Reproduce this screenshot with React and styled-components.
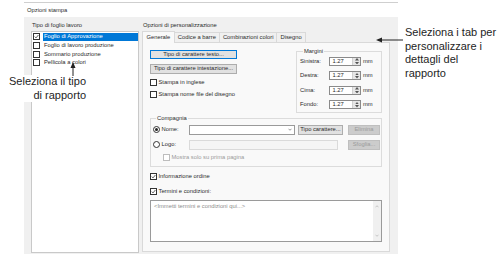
import React from 'react';
import styled, { createGlobalStyle } from 'styled-components';

const GlobalStyle = createGlobalStyle`
  html, body {
    margin: 0;
    padding: 0;
    background: #fff;
  }
  body {
    font-family: "Liberation Sans", Arial, sans-serif;
  }
`;

const Page = styled.div`
  position: relative;
  width: 500px;
  height: 270px;
  overflow: hidden;
  background: #fff;
`;

const Shot = styled.div`
  margin: 2px 0 0 24px;
  width: 374px;
  border-top: 1px solid #cfcfcf;
  font-size: 5.8px;
  line-height: 7px;
  color: #2a2a2a;
`;

const Title = styled.div`
  height: 14px;
  padding-left: 3px;
  display: flex;
  align-items: center;
`;

const Body = styled.div`
  height: 237px;
  display: flex;
  gap: 3px;
  padding: 0 8px 0 7px;
  background: #f0f0f0;
`;

const Column = styled.div`
  width: ${(p) => p.$w}px;
  display: flex;
  flex-direction: column;
`;

const GroupLabel = styled.div`
  height: 14px;
  padding: 4.5px 0 0 1px;
  box-sizing: border-box;
  white-space: nowrap;
`;

const ListBox = styled.div`
  height: 222px;
  background: #fff;
  border: 1px solid #c9c9c9;
  box-sizing: border-box;
  padding-top: 0.5px;
`;

const ListItem = styled.div`
  height: 8.7px;
  display: flex;
  align-items: center;
  padding-left: 1px;
`;

const ItemText = styled.span`
  flex: 1;
  height: 8px;
  margin-left: 3px;
  padding-left: 1px;
  display: flex;
  align-items: center;
  white-space: nowrap;
  background: ${(p) => (p.$selected ? '#0078d7' : 'transparent')};
  color: ${(p) => (p.$selected ? '#fff' : '#2a2a2a')};
`;

const Box = styled.span`
  flex: none;
  width: 7px;
  height: 7px;
  box-sizing: border-box;
  border: 1px solid ${(p) => (p.$disabled ? '#bdbdbd' : '#333')};
  background: #fff;
  display: inline-flex;
  align-items: center;
  justify-content: center;
`;

const Radio = styled(Box)`
  border-radius: 50%;
  &::after {
    content: '';
    width: 3px;
    height: 3px;
    border-radius: 50%;
    background: ${(p) => (p.$on ? '#222' : 'transparent')};
  }
`;

const Check = ({ on, disabled }) => (
  <Box $disabled={disabled}>
    {on && (
      <svg width="5" height="5" viewBox="0 0 10 10">
        <path d="M1.5 5.2 L4 7.8 L8.8 2" fill="none" stroke="#222" strokeWidth="1.4" />
      </svg>
    )}
  </Box>
);

const TabRow = styled.div`
  height: 11px;
  display: flex;
  align-items: flex-end;
  padding-left: 1px;
`;

const Tab = styled.div`
  height: ${(p) => (p.$active ? '11px' : '10px')};
  box-sizing: border-box;
  padding: 0 ${(p) => p.$pad}px;
  display: flex;
  align-items: center;
  white-space: nowrap;
  border: 1px solid #d9d9d9;
  border-bottom: none;
  margin-left: -1px;
  background: ${(p) => (p.$active ? '#f9f9f9' : '#f0f0f0')};
  position: relative;
  z-index: ${(p) => (p.$active ? 1 : 0)};
  margin-bottom: ${(p) => (p.$active ? '-1px' : '0')};
  height: ${(p) => (p.$active ? '12px' : '10px')};
`;

const Panel = styled.div`
  height: 210px;
  box-sizing: border-box;
  border: 1px solid #d9d9d9;
  background: #f9f9f9;
  padding: 6px 7px 0 7px;
  display: flex;
  flex-direction: column;
`;

const TopRow = styled.div`
  display: flex;
  justify-content: space-between;
  align-items: flex-start;
`;

const Stack = styled.div`
  width: 100px;
  display: flex;
  flex-direction: column;
  padding-top: 0.5px;
`;

const Button = styled.div`
  width: ${(p) => p.$w}px;
  height: 9.5px;
  box-sizing: border-box;
  flex: none;
  display: flex;
  align-items: center;
  justify-content: center;
  white-space: nowrap;
  background: ${(p) => (p.$disabled ? '#cccccc' : '#e1e1e1')};
  color: ${(p) => (p.$disabled ? '#9a9a9a' : '#2a2a2a')};
  border: 1px solid ${(p) => (p.$focus ? '#0078d7' : p.$disabled ? '#bfbfbf' : '#adadad')};
  margin-top: ${(p) => p.$mt || 0}px;
  margin-left: ${(p) => p.$ml || 0}px;
`;

const CheckRow = styled.div`
  height: 8px;
  display: flex;
  align-items: center;
  gap: 1.5px;
  white-space: nowrap;
  margin-top: ${(p) => p.$mt || 0}px;
  padding-left: ${(p) => p.$pl || 0}px;
  color: ${(p) => (p.$disabled ? '#9a9a9a' : '#2a2a2a')};
`;

const Group = styled.fieldset`
  margin: ${(p) => p.$mt}px 0 0 0;
  width: ${(p) => p.$w}px;
  box-sizing: border-box;
  border: 1px solid #dcdcdc;
  padding: ${(p) => p.$pad};
  min-width: 0;
  display: flex;
  flex-direction: column;
`;

const Legend = styled.legend`
  padding: 0 1px;
  margin-left: 3px;
  line-height: 7px;
  color: #2a2a2a;
`;

const MarginRow = styled.div`
  height: 9px;
  display: flex;
  align-items: center;
  margin-top: ${(p) => p.$mt}px;
`;

const FieldLabel = styled.span`
  width: ${(p) => p.$w}px;
  flex: none;
  white-space: nowrap;
`;

const Spin = styled.div`
  width: 32px;
  height: 9px;
  box-sizing: border-box;
  border: 1px solid #8a8a8a;
  background: #fff;
  display: flex;
`;

const SpinValue = styled.span`
  flex: 1;
  padding-left: 2.5px;
  display: flex;
  align-items: center;
`;

const SpinArrows = styled.span`
  width: 7px;
  display: flex;
  flex-direction: column;
  align-items: center;
  justify-content: space-around;
  background: #e6e6e6;
  border-left: 1px solid #d0d0d0;
`;

const Unit = styled.span`
  margin-left: 2px;
`;

const CompanyRow = styled.div`
  height: 9.5px;
  display: flex;
  align-items: center;
  margin-top: ${(p) => p.$mt}px;
`;

const RadioLabel = styled.span`
  width: 36px;
  flex: none;
  display: flex;
  align-items: center;
  gap: 1.5px;
`;

const Input = styled.div`
  width: ${(p) => p.$w}px;
  height: 9.5px;
  box-sizing: border-box;
  flex: none;
  border: 1px solid ${(p) => (p.$disabled ? '#dadada' : '#9a9a9a')};
  background: ${(p) => (p.$disabled ? '#f5f5f5' : '#fff')};
  display: flex;
  align-items: center;
  justify-content: flex-end;
  padding-right: 2px;
`;

const TextArea = styled.div`
  margin-top: 4px;
  height: 42px;
  box-sizing: border-box;
  border: 1px solid #9a9a9a;
  background: #fff;
  display: flex;
`;

const Placeholder = styled.span`
  flex: 1;
  padding: 2px 0 0 3px;
  color: #8c8c8c;
  white-space: nowrap;
`;

const ScrollBar = styled.span`
  width: 8px;
  background: #f0f0f0;
  display: flex;
  flex-direction: column;
  align-items: center;
  justify-content: space-between;
  padding: 4px 0;
`;

const Callout = styled.div`
  position: absolute;
  left: ${(p) => p.$x}px;
  top: ${(p) => p.$y}px;
  font-family: "Liberation Sans", Arial, sans-serif;
  font-size: 11px;
  line-height: 13.5px;
  color: #1e1e1e;
  text-align: ${(p) => p.$align || 'left'};
  background: ${(p) => p.$bg || 'transparent'};
  padding: ${(p) => p.$pad || '0'};
  white-space: nowrap;
`;

const Arrow = styled.svg`
  position: absolute;
  left: ${(p) => p.$x}px;
  top: ${(p) => p.$y}px;
`;

const Chevron = ({ up, color = '#777' }) => (
  <svg width="4" height="3" viewBox="0 0 8 5">
    <path d={up ? 'M1 4 L4 1 L7 4' : 'M1 1 L4 4 L7 1'} fill="none" stroke={color} strokeWidth="1.2" />
  </svg>
);

const Tri = ({ up }) => (
  <svg width="4" height="2.5" viewBox="0 0 8 5">
    <path d={up ? 'M0 5 L4 0 L8 5 Z' : 'M0 0 L4 5 L8 0 Z'} fill="#555" />
  </svg>
);

const items = [
  'Foglio di Approvazione',
  'Foglio di lavoro produzione',
  'Sommario produzione',
  'Pellicola a colori',
];

const margins = [
  ['Sinistra:', 0],
  ['Destra:', 5.5],
  ['Cima:', 5.5],
  ['Fondo:', 5.5],
];

const tabs = [
  ['Generale', 3.5, true],
  ['Codice a barre', 3],
  ['Combinazioni colori', 3],
  ['Disegno', 3],
];

export default function App() {
  return (
    <Page>
      <GlobalStyle />
      <Shot>
        <Title>Opzioni stampa</Title>
        <Body>
          <Column $w={108}>
            <GroupLabel>Tipo di foglio lavoro</GroupLabel>
            <ListBox>
              {items.map((t, i) => (
                <ListItem key={t}>
                  <Check on={i === 0} />
                  <ItemText $selected={i === 0}>{t}</ItemText>
                </ListItem>
              ))}
            </ListBox>
          </Column>
          <Column $w={248}>
            <GroupLabel>Opzioni di personalizzazione</GroupLabel>
            <TabRow>
              {tabs.map(([t, pad, active]) => (
                <Tab key={t} $pad={pad} $active={active}>{t}</Tab>
              ))}
            </TabRow>
            <Panel>
              <TopRow>
                <Stack>
                  <Button $w={87} $focus>Tipo di carattere testo...</Button>
                  <Button $w={87} $mt={5}>Tipo di carattere intestazione...</Button>
                  <CheckRow $mt={5}><Check />Stampa in inglese</CheckRow>
                  <CheckRow $mt={4}><Check />Stampa nome file del disegno</CheckRow>
                </Stack>
                <Group $w={86} $mt={-1.5} $pad="2px 0 3px 3px">
                  <Legend>Margini</Legend>
                  {margins.map(([l, mt]) => (
                    <MarginRow key={l} $mt={mt}>
                      <FieldLabel $w={29}>{l}</FieldLabel>
                      <Spin>
                        <SpinValue>1.27</SpinValue>
                        <SpinArrows><Tri up /><Tri /></SpinArrows>
                      </Spin>
                      <Unit>mm</Unit>
                    </MarginRow>
                  ))}
                </Group>
              </TopRow>
              <Group $w={232} $mt={1.5} $pad="3.7px 0 4.5px 2px">
                <Legend>Compagnia</Legend>
                <CompanyRow $mt={0}>
                  <RadioLabel><Radio $on />Nome:</RadioLabel>
                  <Input $w={106}><Chevron color="#555" /></Input>
                  <Button $w={45} $ml={3}>Tipo carattere...</Button>
                  <Button $w={32} $ml={5} $disabled>Elimina</Button>
                </CompanyRow>
                <CompanyRow $mt={5.5}>
                  <RadioLabel><Radio />Logo:</RadioLabel>
                  <Input $w={149} $disabled />
                  <Button $w={32} $ml={10} $disabled>Sfoglia...</Button>
                </CompanyRow>
                <CheckRow $mt={3.5} $pl={10} $disabled>
                  <Check disabled />Mostra solo su prima pagina
                </CheckRow>
              </Group>
              <CheckRow $mt={6}><Check on />Informazione ordine</CheckRow>
              <CheckRow $mt={7}><Check on />Termini e condizioni:</CheckRow>
              <TextArea>
                <Placeholder>&lt;Immetti termini e condizioni qui...&gt;</Placeholder>
                <ScrollBar><Chevron up color="#aaa" /><Chevron color="#aaa" /></ScrollBar>
              </TextArea>
            </Panel>
          </Column>
        </Body>
      </Shot>

      <Callout $x={405} $y={26}>
        Seleziona i tab per
        <br />
        personalizzare i
        <br />
        dettagli del
        <br />
        rapporto
      </Callout>
      <Arrow $x={376} $y={37} width="27" height="6" viewBox="0 0 27 6">
        <path d="M2 3 H27" stroke="#222" strokeWidth="1" />
        <path d="M0 3 L6 0.5 L6 5.5 Z" fill="#222" />
      </Arrow>

      <Callout $x={4} $y={75} $align="right" $bg="#fff" $pad="0 3px 0 5px">
        Seleziona il tipo
        <br />
        di rapporto
      </Callout>
      <Arrow $x={70} $y={62} width="6" height="14" viewBox="0 0 6 14">
        <path d="M3 3 V14" stroke="#222" strokeWidth="1" />
        <path d="M3 0 L5.5 6 L0.5 6 Z" fill="#222" />
      </Arrow>
    </Page>
  );
}
